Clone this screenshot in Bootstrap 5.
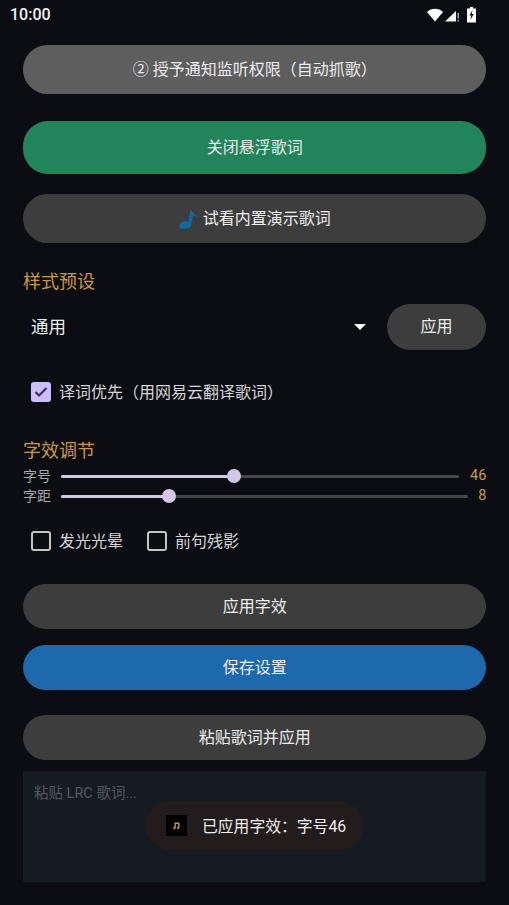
<!DOCTYPE html>
<html lang="zh-CN">
<head>
<meta charset="utf-8">
<title>歌词</title>
<link rel="stylesheet" href="https://cdn.jsdelivr.net/npm/bootstrap@5.3.0/dist/css/bootstrap.min.css">
<style>
html,body{height:905px;overflow:hidden}
body{background:#0b0d12;color:#e8e8e8;font-family:Roboto,"Noto Sans CJK SC",sans-serif;position:relative}
.sbar{height:30px;padding:0 32px 1px 10px;color:#f2f2f2;font:500 16px/28px Roboto,sans-serif}
.wrap{padding:15px 22.7px 0 23px}
.pill{display:block;width:100%;border:0;border-radius:25px;color:#ededed;font-size:16px;line-height:22px;text-align:center;padding:0}
.pill:hover,.pill:active,.pill:focus{color:#ededed}
.p1{height:49px;background:#5e5e5e;margin-bottom:27px}
.p2{height:53px;background:#218559;margin-bottom:20px}
.p3{height:49px;background:#3d3d3d}
.p4{height:45px;background:#3d3d3d;margin-bottom:16px}
.p5{height:45px;background:#1e68ac;margin-bottom:25px}
.p6{height:45px;background:#3d3d3d;margin-bottom:11px}
.sect{color:#c99a3d;font-size:18px;line-height:24px;margin:0}
.sec1{margin-top:27px}
.sel{height:46px;margin-top:10px}
.selv{font-size:17.5px;color:#eee;padding-left:8px}
.caret{width:0;height:0;border-left:6px solid transparent;border-right:6px solid transparent;border-top:6px solid #fff;margin-right:21px}
.p7{width:99.500px;height:46px;background:#3d3d3d;flex:none}
.chk{width:20px;height:20px;border:2.5px solid #c4c4c4;border-radius:3px;background:transparent;flex:none;display:flex;align-items:center;justify-content:center}
.chk.on{background:#cfbcff;border-color:#cfbcff}
.clab{font-size:16px;color:#d6d6d6;line-height:20px;position:relative;top:1px}
.crow1{margin-top:32px;padding-left:8px;gap:8px}
.sec2{margin-top:37px}
.srow{height:20px;font-size:14px;color:#a8a8a8;gap:10px}
.slab{width:28px;flex:none;line-height:20px}
.trk{flex:1 1 auto;height:3px;background:#46464a;position:relative;border-radius:2px}
.fil{height:3px;background:#d3c8e6;border-radius:2px}
.thm{position:absolute;top:-5.5px;width:14px;height:14px;border-radius:50%;background:#d3c8e6;margin-left:-7px}
.sval{color:#c99a3d;font-size:14.500px;text-align:right;font-family:Roboto,sans-serif;flex:none}
.v1{width:17px}
.v2{width:8px}
.srows{margin-top:3px}
.crow2{margin-top:25px;padding-left:8px}
.cgrp{gap:8px}
.cgap{gap:24px}
.ta{height:111px;background:#161b22;color:#53585f;font-size:14.5px;padding:13px 11px;line-height:20px;width:100%}
.toast-box{position:absolute;left:146px;top:801px;width:217px;height:49px;background:#221d1c;border-radius:25px;display:flex;align-items:center;padding-left:20px;gap:15px;color:#eee;font-size:15.8px}
.tico{width:21px;height:21px;background:#000;display:flex;align-items:center;justify-content:center;flex:none}
.tmsg{padding-top:2px}
.mt33{margin-top:33px}
.mnote{margin-right:5px}
</style>
</head>
<body>
<div class="sbar d-flex justify-content-between align-items-center">
  <span>10:00</span>
  <svg width="50" height="16" viewBox="0 0 50 16" class="d-block">
    <path d="M0 5C4.500 .8 11.500 .8 16 5L8 14.500Z" fill="#fff"/>
    <path d="M18 14.500 29 4V14.500Z" fill="#f4f4f4"/>
    <path d="M30.500 6h1.300v5.500h-1.300zM30.500 12.800h1.300v1.700h-1.300z" fill="#bbb"/>
    <path d="M43 1.500V0h3V1.500H49V15.500H40V1.500Z" fill="#fff"/>
    <path d="M45.500 3 42.500 8.500H44.300L43.300 13 46.800 7H44.800Z" fill="#111"/>
  </svg>
</div>
<div class="wrap">
  <button class="btn pill p1">② 授予通知监听权限（自动抓歌）</button>
  <button class="btn pill p2">关闭悬浮歌词</button>
  <button class="btn pill p3 d-flex justify-content-center align-items-center">
    <svg width="19" height="20" viewBox="0 0 19 20" class="mnote"><path d="M11.500.5C13 3.500 16.500 4.500 18.500 9 16.800 7.300 15 6.500 14 6.500L12.200 16C11.800 18.200 8.500 19.800 5 19.800 2 19.800 0 18.500 .3 16.500.7 14 3.500 12.300 6.500 12.300 7.500 12.300 8.500 12.500 9.300 13Z" fill="#0f6aa8"/></svg>试看内置演示歌词
  </button>
  <p class="sect sec1">样式预设</p>
  <div class="sel d-flex align-items-center">
    <span class="selv flex-grow-1">通用</span>
    <span class="caret"></span>
    <button class="btn pill p7">应用</button>
  </div>
  <div class="crow1 d-flex align-items-center">
    <span class="chk on"><svg width="14" height="12" viewBox="0 0 14 12"><path d="M1.500 6 5 9.500 12.500 2" fill="none" stroke="#3d2f6b" stroke-width="2.200"/></svg></span>
    <span class="clab">译词优先（用网易云翻译歌词）</span>
  </div>
  <p class="sect sec2">字效调节</p>
  <div class="srows">
    <div class="srow d-flex align-items-center">
      <span class="slab">字号</span>
      <div class="trk"><div class="fil" style="width:43.500%"></div><span class="thm" style="left:43.500%"></span></div>
      <span class="sval v1">46</span>
    </div>
    <div class="srow d-flex align-items-center">
      <span class="slab">字距</span>
      <div class="trk"><div class="fil" style="width:26.500%"></div><span class="thm" style="left:26.500%"></span></div>
      <span class="sval v2">8</span>
    </div>
  </div>
  <div class="crow2 d-flex cgap">
    <div class="d-flex align-items-center cgrp"><span class="chk"></span><span class="clab">发光光晕</span></div>
    <div class="d-flex align-items-center cgrp"><span class="chk"></span><span class="clab">前句残影</span></div>
  </div>
  <button class="btn pill p4 mt33">应用字效</button>
  <button class="btn pill p5">保存设置</button>
  <button class="btn pill p6">粘贴歌词并应用</button>
  <div class="ta">粘贴 LRC 歌词...</div>
</div>
<div class="toast-box">
  <span class="tico"><svg width="7" height="8" viewBox="0 0 9 10"><path d="M2.700 1.500V7.500M7.500 1.500V7M2 1.500H8" fill="none" stroke="#c99a3d" stroke-width="1.800"/><ellipse cx="1.700" cy="8" rx="1.500" ry="1.300" fill="#c99a3d"/><ellipse cx="6.500" cy="7.500" rx="1.500" ry="1.300" fill="#c99a3d"/></svg></span>
  <span class="tmsg">已应用字效：字号46</span>
</div>
</body>
</html>
